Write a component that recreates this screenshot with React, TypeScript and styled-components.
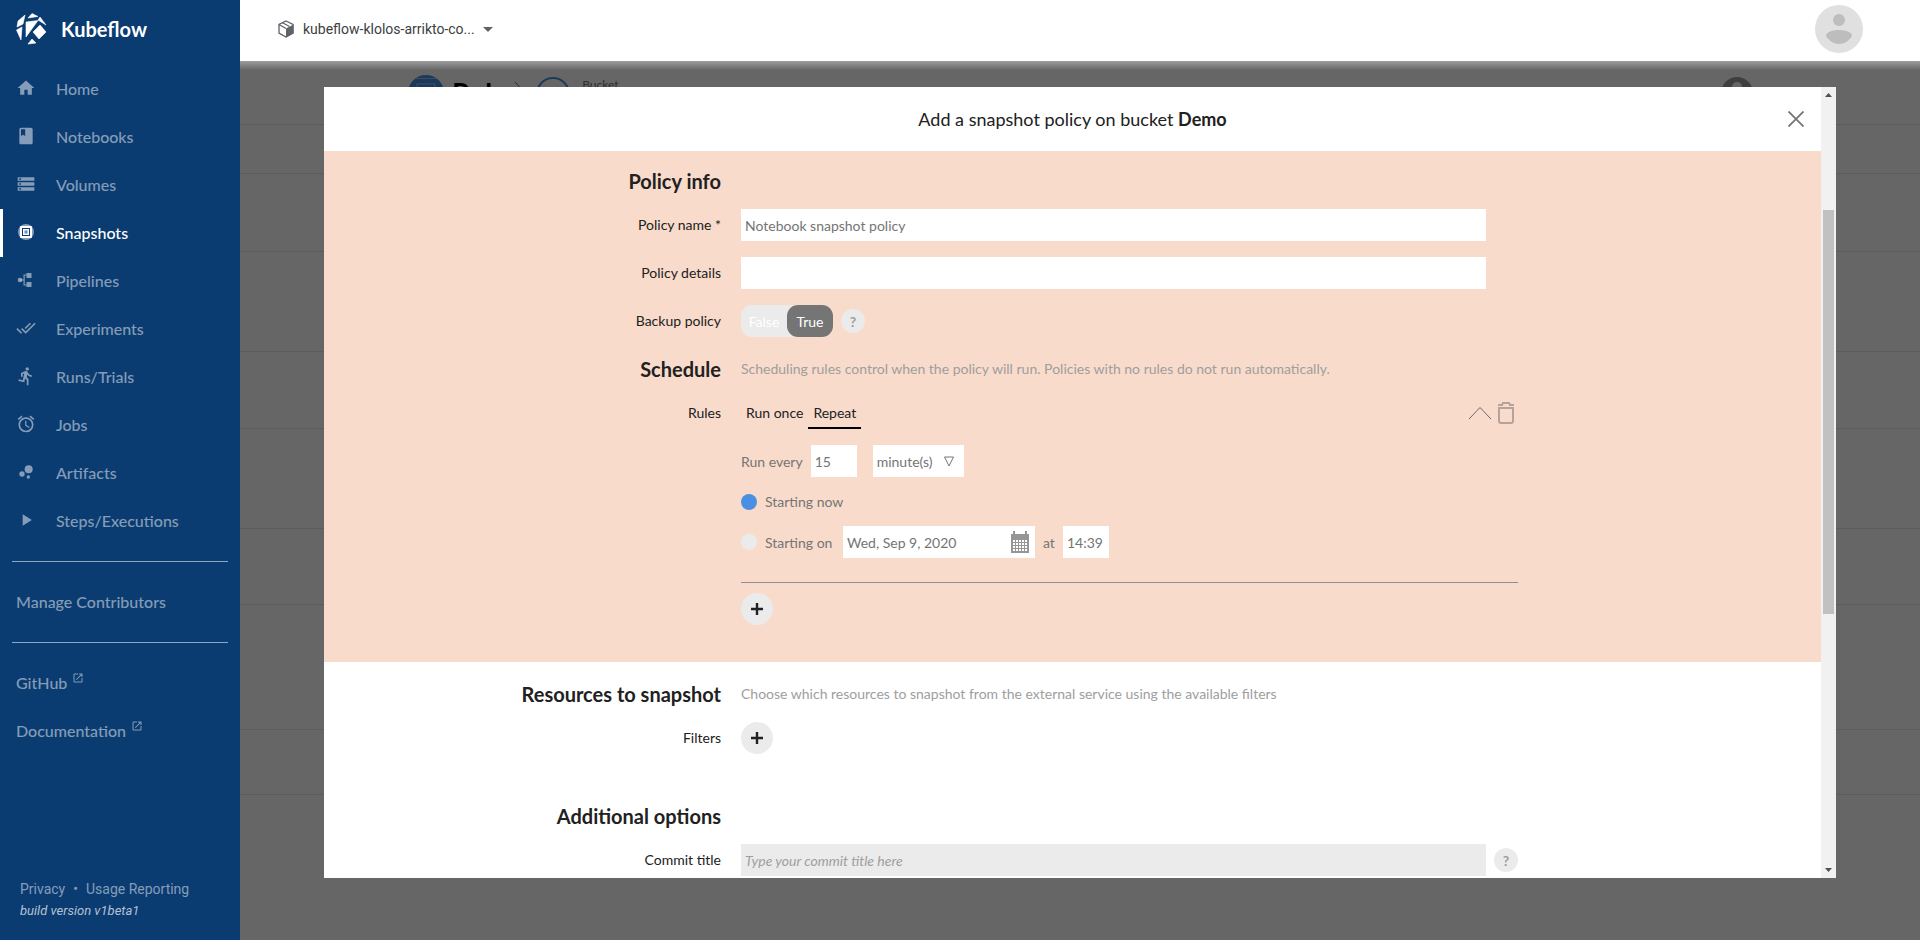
import React from 'react';
import styled, { createGlobalStyle } from 'styled-components';
import {
  MdHome, MdBook, MdStorage, MdDoneAll, MdDirectionsRun, MdAlarm, MdBubbleChart, MdPlayArrow, MdOpenInNew,
} from 'react-icons/md';

const GlobalStyle = createGlobalStyle`
  *, *::before, *::after { box-sizing: border-box; }
  body { margin: 0; font-family: Lato, sans-serif; font-size: 14px; color: #212121; }
  button, input, select { font: inherit; color: inherit; margin: 0; padding: 0; border: 0; border-radius: 0; }
  button { background: none; cursor: pointer; }
  a { color: inherit; text-decoration: none; }
  svg { display: block; flex: none; }
`;

const Shell = styled.div`
  display: flex;
  height: 100vh;
  overflow: hidden;
`;

/* ---------- sidebar ---------- */

const Sidebar = styled.aside`
  display: flex;
  flex-direction: column;
  flex: none;
  width: 240px;
  background: #0a3b71;
  color: rgba(255, 255, 255, 0.5);
`;

const Brand = styled.a`
  display: flex;
  align-items: center;
  gap: 14px;
  height: 57px;
  margin-bottom: 8px;
  padding-left: 16px;
  color: #fff;
  font-size: 20px;
  font-weight: 700;
`;

const NavItem = styled.a<{ $active?: boolean }>`
  display: flex;
  align-items: center;
  gap: 20px;
  height: 48px;
  padding: 0 0 2px 13px;
  border-left: 3px solid ${(p) => (p.$active ? '#fff' : 'transparent')};
  color: ${(p) => (p.$active ? '#fff' : 'inherit')};
  font-size: 16px;
  font-weight: 500;
`;

const ExternalItem = styled(NavItem)`
  gap: 5px;
  svg { margin-bottom: 8px; }
`;

const NavDivider = styled.hr`
  width: 216px;
  height: 1px;
  margin: 16px 12px;
  border: 0;
  background: rgba(255, 255, 255, 0.55);
`;

const SidebarFooter = styled.footer`
  margin-top: auto;
  padding: 0 20px 18px;
  font-family: Roboto, sans-serif;
  font-size: 14px;
  line-height: 22px;
`;

const FooterLinks = styled.div`
  display: flex;
  gap: 8px;
`;

const BuildVersion = styled.div`
  color: rgba(255, 255, 255, 0.7);
  font-size: 13px;
  font-style: italic;
`;

/* ---------- top bar ---------- */

const Main = styled.div`
  display: flex;
  flex: 1;
  flex-direction: column;
  min-width: 0;
`;

const TopBar = styled.header`
  display: flex;
  align-items: center;
  justify-content: space-between;
  flex: none;
  height: 61px;
  padding: 0 57px 3px 37px;
  background: #fff;
`;

const NamespaceButton = styled.button`
  display: flex;
  align-items: center;
  gap: 8px;
  color: #5f6368;
  font-family: Roboto, sans-serif;
`;

const NamespaceName = styled.span`
  color: #3c4043;
  font-size: 14px;
`;

/* ---------- page under the dialog ---------- */

const Stage = styled.div`
  position: relative;
  flex: 1;
  min-height: 0;
`;

const Backdrop = styled.div`
  height: 100%;
  overflow: hidden;
  background: #fff;
`;

const BackRow = styled.div<{ $h: number }>`
  height: ${(p) => p.$h}px;
  border-bottom: 1px solid #e6e6e6;
`;

const Crumbs = styled(BackRow)`
  display: flex;
  align-items: flex-start;
  padding: 14px 167px 0 168px;
`;

const CrumbTitle = styled.strong`
  margin: 4px 14px 0 8px;
  color: #000;
  font-size: 28px;
  line-height: 28px;
`;

const CrumbCircle = styled.svg`
  margin: 0 12px;
`;

const CrumbLabel = styled.span`
  flex: 1;
  color: #757575;
  font-size: 12px;
  line-height: 20px;
`;

const Scrim = styled.div`
  position: absolute;
  inset: 0;
  display: grid;
  grid-template: 26fr 791fr 62fr / 1fr 18fr 1fr;
  background: rgba(0, 0, 0, 0.6);

  &::before {
    content: '';
    position: absolute;
    inset: 0 0 auto;
    height: 9px;
    background: linear-gradient(rgba(255, 255, 255, 0.36), rgba(255, 255, 255, 0));
  }
`;

/* ---------- dialog ---------- */

const Dialog = styled.section`
  grid-area: 2 / 2;
  display: flex;
  min-height: 0;
  background: #fff;
`;

const DialogContent = styled.div`
  flex: 1;
  min-width: 0;
  overflow: hidden;
`;

const DialogHeader = styled.header`
  display: grid;
  grid-template-columns: 1fr auto 1fr;
  align-items: center;
  height: 64px;
  padding: 0 17px;
`;

const DialogTitle = styled.h1`
  grid-column: 2;
  margin: 0;
  font-size: 18px;
  font-weight: 400;
  line-height: 24px;
`;

const CloseButton = styled.button`
  justify-self: end;
`;

const FormSection = styled.section<{ $tinted?: boolean }>`
  display: grid;
  grid-template-columns: 397fr 777fr 283fr;
  column-gap: 20px;
  row-gap: 16px;
  padding: ${(p) => (p.$tinted ? '14px 0 37px' : '16px 0 30px')};
  background: ${(p) => (p.$tinted ? '#f8dbcb' : '#fff')};
`;

const SectionTitle = styled.h2`
  grid-column: 1;
  margin: 0 0 -4px;
  font-size: 20px;
  font-weight: 700;
  line-height: 32px;
  text-align: right;
`;

const SectionHint = styled.p`
  grid-column: 2;
  margin: 0 0 -4px;
  color: #9e9e9e;
  line-height: 32px;
`;

const Label = styled.label`
  grid-column: 1;
  color: #212121;
  line-height: 32px;
  text-align: right;
`;

const Field = styled.div`
  grid-column: 2;
  display: flex;
  align-items: center;
  gap: 8px;
`;

const TextInput = styled.input<{ $w?: number; $muted?: boolean }>`
  flex: ${(p) => (p.$w ? 'none' : '1')};
  width: ${(p) => (p.$w ? `${p.$w}px` : 'auto')};
  min-width: 0;
  height: 32px;
  padding: 0 4px;
  background: ${(p) => (p.$muted ? '#ebebeb' : '#fff')};
  color: #757575;

  &::placeholder { color: #9e9e9e; font-style: italic; opacity: 1; }
`;

const HelpSlot = styled.div`
  flex: none;
  width: 24px;
`;

const HelpButton = styled.button`
  display: block;
  width: 24px;
  height: 24px;
  border-radius: 50%;
  background: #ebebeb;
  color: #9e9e9e;
  font-weight: 700;
`;

const Toggle = styled.div`
  display: flex;
  border-radius: 11px;
  background: #ebebeb;
`;

const ToggleOption = styled.button<{ $on?: boolean }>`
  width: 46px;
  height: 32px;
  border-radius: 11px;
  background: ${(p) => (p.$on ? '#757575' : 'transparent')};
  color: #fff;
`;

const RuleColumn = styled.div`
  grid-column: 2;
  display: flex;
  flex-direction: column;
  align-items: stretch;
  gap: 16px;
`;

const RuleBar = styled.div`
  display: flex;
  justify-content: space-between;
`;

const Tabs = styled.div`
  display: flex;
`;

const Tab = styled.button<{ $on?: boolean }>`
  height: 32px;
  padding: 0 5px;
  border-bottom: 2px solid ${(p) => (p.$on ? '#000' : 'transparent')};
`;

const RuleActions = styled.div`
  display: flex;
  align-items: center;
  gap: 2px;
`;

const RuleLine = styled.div`
  display: flex;
  align-items: center;
  gap: 8px;
  color: #757575;
`;

const StartLabel = styled.label`
  min-width: 70px;
`;

const SelectWrap = styled.div`
  position: relative;
  width: 91px;
  margin-left: 8px;

  svg { position: absolute; top: 11px; right: 10px; pointer-events: none; }
`;

const Select = styled.select`
  appearance: none;
  width: 100%;
  height: 32px;
  padding: 0 4px;
  background: #fff;
  color: #757575;
`;

const Radio = styled.input`
  appearance: none;
  flex: none;
  width: 16px;
  height: 16px;
  border-radius: 50%;
  background: #ebebeb;

  &:checked { background: #4a90e2; }
`;

const DateField = styled.div`
  display: flex;
  align-items: center;
  justify-content: space-between;
  width: 192px;
  padding-right: 6px;
  background: #fff;
`;

const RuleDivider = styled.hr`
  width: 100%;
  height: 1px;
  margin: 8px 0 -6px;
  border: 0;
  background: #8f8f8f;
`;

const AddButton = styled.button`
  display: flex;
  align-items: center;
  justify-content: center;
  width: 32px;
  height: 32px;
  border-radius: 50%;
  background: #ebebeb;
`;

const Scrollbar = styled.div`
  display: flex;
  flex-direction: column;
  align-items: center;
  flex: none;
  width: 15px;
  padding: 6px 0;
  background: #f1f1f1;
`;

const ScrollTrack = styled.div`
  display: grid;
  grid-template-rows: 106fr 404fr 247fr;
  flex: 1;
  width: 11px;
  margin: 7px 0;
`;

const ScrollThumb = styled.div`
  grid-row: 2;
  background: #c1c1c1;
`;

/* ---------- drawings ---------- */

const KubeflowLogo = () => (
  <svg width="31" height="32" viewBox="0 0 31 32" fill="#fff" stroke="#fff" strokeWidth="0.600" strokeLinejoin="round" aria-hidden="true">
    <path d="M12 5 16 0.500 22 3.500ZM2 8 9 2 7 11 1 14ZM24 4 30 12 22 7ZM10 9 22 7.500 10 24ZM0.500 17 6 14 5 27ZM24 12 30 19 23 26 17 19ZM12 31 16 26 20 30Z" />
  </svg>
);

const SnapshotIcon = () => (
  <svg width="20" height="20" viewBox="0 0 20 20" fill="none" aria-hidden="true">
    <circle cx="10" cy="10" r="8" fill="#fff" fillOpacity="0.5" />
    <rect x="4" y="4" width="12" height="12" rx="1" fill="#fff" />
    <rect x="6.5" y="6.5" width="7" height="7" stroke="#0a3b71" />
    <rect x="8.5" y="8.5" width="3" height="3" fill="#0a3b71" fillOpacity="0.6" />
  </svg>
);

const PipelineIcon = () => (
  <svg width="20" height="20" viewBox="0 0 20 20" fill="currentColor" aria-hidden="true">
    <circle cx="4" cy="10" r="2.3" />
    <path d="M4 9.500H7.500V4.500H12V5.500H8.700V14.500H12V15.500H7.500V10.500H4ZM10.500 3H15.500V8H10.500ZM10.500 12H15.500V17H10.500Z" />
  </svg>
);

const PackageIcon = () => (
  <svg width="18" height="18" viewBox="0 0 18 18" aria-hidden="true">
    <path d="M9 1 16 4.500V13L9 17 2 13V4.500Z" fill="none" stroke="#5f6368" strokeWidth="1.300" />
    <path d="M9 8.500 16.500 4.500V13.300L9 17.500Z" fill="#5f6368" />
    <path d="M2 4.500 9 8.500 M5.500 2.800 12.500 6.500" fill="none" stroke="#5f6368" strokeWidth="1.300" />
  </svg>
);

const Avatar = () => (
  <svg width="48" height="48" viewBox="0 0 48 48" role="img" aria-label="Account">
    <circle cx="24" cy="24" r="24" fill="#e0e0e0" />
    <circle cx="24" cy="15" r="6" fill="#bdbdbd" />
    <path d="M11 31C11 27 18 25 24 25S37 27 37 31C34 36 29 39 24 39S14 36 11 31Z" fill="#bdbdbd" />
  </svg>
);

const CalendarIcon = () => (
  <svg width="18" height="22" viewBox="0 0 18 22" aria-hidden="true">
    <path d="M0 3H2V0H4V3H14V0H16V3H18V22H0Z" fill="#969696" />
    <g fill="#fff">
      {[9, 12, 15, 18].map((y) => [2, 5, 8, 11, 14].map((x) => (
        <rect key={`${x}-${y}`} x={x} y={y} width="2" height="2" />
      )))}
    </g>
  </svg>
);

const PlusIcon = () => (
  <svg width="12" height="12" viewBox="0 0 12 12" aria-hidden="true">
    <path d="M6 0V12M0 6H12" stroke="#212121" strokeWidth="2.400" />
  </svg>
);

const navItems = [
  { label: 'Home', icon: <MdHome size={20} /> },
  { label: 'Notebooks', icon: <MdBook size={20} /> },
  { label: 'Volumes', icon: <MdStorage size={20} /> },
  { label: 'Snapshots', icon: <SnapshotIcon />, active: true },
  { label: 'Pipelines', icon: <PipelineIcon /> },
  { label: 'Experiments', icon: <MdDoneAll size={20} /> },
  { label: 'Runs/Trials', icon: <MdDirectionsRun size={20} /> },
  { label: 'Jobs', icon: <MdAlarm size={20} /> },
  { label: 'Artifacts', icon: <MdBubbleChart size={20} /> },
  { label: 'Steps/Executions', icon: <MdPlayArrow size={20} /> },
];

const backRows = [49, 78, 100, 77, 100, 76, 125, 65];

export default function App() {
  return (
    <>
      <GlobalStyle />
      <Shell>
        <Sidebar>
          <Brand href="#"><KubeflowLogo />Kubeflow</Brand>
          <nav>
            {navItems.map((item) => (
              <NavItem key={item.label} href="#" $active={item.active}>
                {item.icon}
                {item.label}
              </NavItem>
            ))}
            <NavDivider />
            <NavItem href="#">Manage Contributors</NavItem>
            <NavDivider />
            <ExternalItem href="#">GitHub <MdOpenInNew size={12} /></ExternalItem>
            <ExternalItem href="#">Documentation <MdOpenInNew size={12} /></ExternalItem>
          </nav>
          <SidebarFooter>
            <FooterLinks>
              <a href="#">Privacy</a>
              <span>•</span>
              <a href="#">Usage Reporting</a>
            </FooterLinks>
            <BuildVersion>build version v1beta1</BuildVersion>
          </SidebarFooter>
        </Sidebar>

        <Main>
          <TopBar>
            <NamespaceButton>
              <PackageIcon />
              <NamespaceName>kubeflow-klolos-arrikto-co...</NamespaceName>
              <svg width="10" height="5" viewBox="0 0 10 5" aria-hidden="true">
                <path d="M0 0H10L5 5Z" fill="#5f6368" />
              </svg>
            </NamespaceButton>
            <Avatar />
          </TopBar>

          <Stage>
            <Backdrop aria-hidden="true">
              <Crumbs $h={64}>
                <svg width="36" height="36" viewBox="0 0 36 36">
                  <circle cx="18" cy="18" r="18" fill="#4a90e2" />
                  <path d="M8 3.500H28M9 9H27V25H9Z" fill="none" stroke="#9cc3f0" />
                </svg>
                <CrumbTitle>Rok</CrumbTitle>
                <svg width="10" height="32" viewBox="0 0 10 32">
                  <path d="M1 7 9 16 1 25" fill="none" stroke="#757575" />
                </svg>
                <CrumbCircle width="34" height="36" viewBox="0 0 34 36">
                  <circle cx="17" cy="19" r="16" fill="none" stroke="#4a90e2" strokeWidth="2" />
                </CrumbCircle>
                <CrumbLabel>Bucket</CrumbLabel>
                <svg width="32" height="34" viewBox="0 0 32 34">
                  <circle cx="16" cy="18" r="16" fill="#9e9e9e" />
                  <circle cx="16" cy="12" r="5" fill="#fff" />
                </svg>
              </Crumbs>
              {backRows.map((h, i) => <BackRow key={i} $h={h} />)}
            </Backdrop>

            <Scrim>
              <Dialog role="dialog" aria-labelledby="dialog-title">
                <DialogContent>
                  <DialogHeader>
                    <DialogTitle id="dialog-title">Add a snapshot policy on bucket <strong>Demo</strong></DialogTitle>
                    <CloseButton aria-label="Close">
                      <svg width="16" height="16" viewBox="0 0 16 16">
                        <path d="M0.500 0.500 15.500 15.500M15.500 0.500 0.500 15.500" stroke="#757575" strokeWidth="1.800" />
                      </svg>
                    </CloseButton>
                  </DialogHeader>

                  <FormSection $tinted>
                    <SectionTitle>Policy info</SectionTitle>

                    <Label htmlFor="policy-name">Policy name *</Label>
                    <Field>
                      <TextInput id="policy-name" defaultValue="Notebook snapshot policy" />
                      <HelpSlot />
                    </Field>

                    <Label htmlFor="policy-details">Policy details</Label>
                    <Field>
                      <TextInput id="policy-details" />
                      <HelpSlot />
                    </Field>

                    <Label as="span" id="backup-label">Backup policy</Label>
                    <Field>
                      <Toggle role="group" aria-labelledby="backup-label">
                        <ToggleOption aria-pressed="false">False</ToggleOption>
                        <ToggleOption $on aria-pressed="true">True</ToggleOption>
                      </Toggle>
                      <HelpButton>?</HelpButton>
                    </Field>

                    <SectionTitle>Schedule</SectionTitle>
                    <SectionHint>Scheduling rules control when the policy will run. Policies with no rules do not run automatically.</SectionHint>

                    <Label as="span">Rules</Label>
                    <RuleColumn>
                      <RuleBar>
                        <Tabs role="tablist">
                          <Tab role="tab" aria-selected="false">Run once</Tab>
                          <Tab role="tab" aria-selected="true" $on>Repeat</Tab>
                        </Tabs>
                        <RuleActions>
                          <button aria-label="Collapse rule">
                            <svg width="24" height="24" viewBox="0 0 24 24">
                              <path d="M1 18 12 6.500 23 18" fill="none" stroke="#6e6a68" />
                            </svg>
                          </button>
                          <button aria-label="Delete rule">
                            <svg width="24" height="24" viewBox="0 0 24 24" fill="none" stroke="#b5a29a" strokeWidth="2">
                              <path d="M5 7H19V20Q19 22 17 22H7Q5 22 5 20ZM4 4H8L9 2H15L16 4H20" />
                            </svg>
                          </button>
                        </RuleActions>
                      </RuleBar>

                      <RuleLine>
                        <label htmlFor="interval">Run every</label>
                        <TextInput id="interval" $w={46} defaultValue="15" />
                        <SelectWrap>
                          <Select aria-label="Interval unit" defaultValue="minute(s)">
                            <option>minute(s)</option>
                            <option>hour(s)</option>
                            <option>day(s)</option>
                          </Select>
                          <svg width="10" height="11" viewBox="0 0 10 11">
                            <path d="M0.500 1H9.500L5 10Z" fill="none" stroke="#757575" strokeLinejoin="round" />
                          </svg>
                        </SelectWrap>
                      </RuleLine>

                      <RuleLine>
                        <Radio type="radio" name="start" id="start-now" defaultChecked />
                        <StartLabel htmlFor="start-now">Starting now</StartLabel>
                      </RuleLine>

                      <RuleLine>
                        <Radio type="radio" name="start" id="start-on" />
                        <StartLabel htmlFor="start-on">Starting on</StartLabel>
                        <DateField>
                          <TextInput $w={150} aria-label="Start date" defaultValue="Wed, Sep 9, 2020" />
                          <CalendarIcon />
                        </DateField>
                        <label htmlFor="start-time">at</label>
                        <TextInput id="start-time" $w={46} defaultValue="14:39" />
                      </RuleLine>

                      <RuleDivider />
                      <AddButton aria-label="Add rule"><PlusIcon /></AddButton>
                    </RuleColumn>
                  </FormSection>

                  <FormSection>
                    <SectionTitle>Resources to snapshot</SectionTitle>
                    <SectionHint>Choose which resources to snapshot from the external service using the available filters</SectionHint>
                    <Label as="span">Filters</Label>
                    <Field>
                      <AddButton aria-label="Add filter"><PlusIcon /></AddButton>
                    </Field>
                  </FormSection>

                  <FormSection>
                    <SectionTitle>Additional options</SectionTitle>
                    <Label htmlFor="commit-title">Commit title</Label>
                    <Field>
                      <TextInput id="commit-title" $muted placeholder="Type your commit title here" />
                      <HelpButton>?</HelpButton>
                    </Field>
                  </FormSection>
                </DialogContent>

                <Scrollbar aria-hidden="true">
                  <svg width="7" height="4" viewBox="0 0 7 4"><path d="M3.500 0 7 4H0Z" fill="#505050" /></svg>
                  <ScrollTrack><ScrollThumb /></ScrollTrack>
                  <svg width="7" height="4" viewBox="0 0 7 4"><path d="M3.500 4 7 0H0Z" fill="#505050" /></svg>
                </Scrollbar>
              </Dialog>
            </Scrim>
          </Stage>
        </Main>
      </Shell>
    </>
  );
}
